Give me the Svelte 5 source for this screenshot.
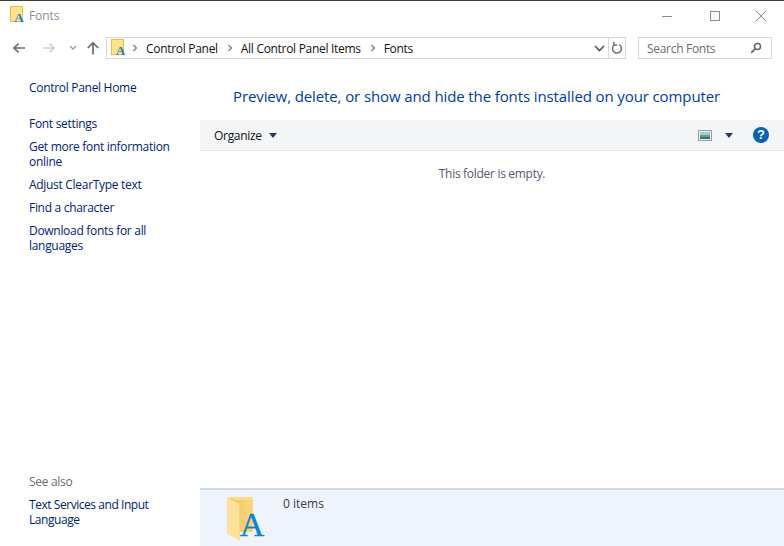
<script>
  const tasks = [
    { label: 'Font settings' },
    { label: 'Get more font information online' },
    { label: 'Adjust ClearType text' },
    { label: 'Find a character' },
    { label: 'Download fonts for all languages' }
  ];
  const crumbs = ['Control Panel', 'All Control Panel Items', 'Fonts'];
</script>

<div class="window">
  <header class="titlebar">
    <svg class="fonticon" width="16" height="19" viewBox="0 0 16 19">
      <rect x="0.5" y="0.5" width="12" height="15" fill="#fde38c" stroke="#e8bd45" />
      <text x="9" y="15.5" class="glyph" font-size="13" text-anchor="middle">A</text>
    </svg>
    <span class="title">Fonts</span>
    <div class="controls">
      <svg width="12" height="12" viewBox="0 0 12 12"><path d="M1 6.5h10" stroke="#8a8a8a" /></svg>
      <svg width="12" height="12" viewBox="0 0 12 12"><rect x="2.5" y="1.5" width="9" height="9" fill="none" stroke="#8a8a8a" /></svg>
      <svg width="12" height="12" viewBox="0 0 12 12"><path d="M1 1l10 10M11 1L1 11" stroke="#8a8a8a" /></svg>
    </div>
  </header>

  <nav class="navbar">
    <svg class="nav back" width="14" height="12" viewBox="0 0 14 12"><path d="M13 6H2M6.500 1.500L2 6l4.500 4.500" fill="none" stroke="#6d6d6d" stroke-width="1.700" /></svg>
    <svg class="nav forward" width="14" height="12" viewBox="0 0 14 12"><path d="M1 6h11M7.500 1.500L12 6l-4.500 4.500" fill="none" stroke="#cfcfcf" stroke-width="1.700" /></svg>
    <svg class="nav recent" width="8" height="6" viewBox="0 0 8 6"><path d="M1 1l3 3 3-3" fill="none" stroke="#9a9a9a" stroke-width="1.300" /></svg>
    <svg class="nav up" width="14" height="14" viewBox="0 0 14 14"><path d="M7 13.500V2M1.800 7L7 1.800 12.200 7" fill="none" stroke="#6d6d6d" stroke-width="1.700" /></svg>

    <div class="address">
      <svg class="fonticon" width="16" height="20" viewBox="0 0 16 20">
        <rect x="0.500" y="1.500" width="12" height="15" fill="#fde38c" stroke="#e8bd45" />
        <text x="9.500" y="16.500" class="glyph" font-size="13" text-anchor="middle">A</text>
      </svg>
      {#each crumbs as crumb}
        <svg class="sep" width="6" height="8" viewBox="0 0 6 8"><path d="M1.500 1l3 3-3 3" fill="none" stroke="#777" stroke-width="1.200" /></svg>
        <span class="crumb">{crumb}</span>
      {/each}
      <svg class="dropdown" width="11" height="7" viewBox="0 0 11 7"><path d="M1 1l4.500 4.500L10 1" fill="none" stroke="#555" stroke-width="1.600" /></svg>
      <div class="refresh">
        <svg width="12" height="14" viewBox="0 0 12 14"><path d="M3.800 3.600a4.500 4.500 0 1 0 4.400 0M2.800 .8v3.200h3.400" fill="none" stroke="#707070" stroke-width="1.500" /></svg>
      </div>
    </div>

    <div class="search">
      <span>Search Fonts</span>
      <svg width="12" height="12" viewBox="0 0 12 12"><circle cx="7.500" cy="4.500" r="3" fill="none" stroke="#666" stroke-width="1.500" /><path d="M5.300 6.700L1.200 10.800" stroke="#666" stroke-width="1.800" /></svg>
    </div>
  </nav>

  <div class="body">
    <aside class="sidebar">
      <div class="links">
        <a class="home" href="#home">Control Panel Home</a>
        {#each tasks as task}
          <a href="#task">{task.label}</a>
        {/each}
      </div>
      <div class="seealso">
        <div class="seelabel">See also</div>
        <a class="tight" href="#text">Text Services and Input Language</a>
      </div>
    </aside>

    <main class="content">
      <h1>Preview, delete, or show and hide the fonts installed on your computer</h1>
      <div class="toolbar">
        <span class="organize">Organize</span>
        <span class="caret"></span>
        <div class="tools">
          <svg width="14" height="11" viewBox="0 0 14 11">
            <rect x="0.500" y="0.500" width="13" height="10" fill="#e8eef3" stroke="#9c9c9c" />
            <rect x="2" y="2" width="10" height="3" fill="#9fcbea" />
            <rect x="2" y="5" width="10" height="2" fill="#6f9c7c" />
            <rect x="2" y="7" width="10" height="2" fill="#3f6f78" />
          </svg>
          <span class="caret"></span>
          <div class="help">?</div>
        </div>
      </div>
      <div class="empty">This folder is empty.</div>
      <footer class="status">
        <svg width="40" height="50" viewBox="0 0 40 50">
          <defs>
            <linearGradient id="folderback" x1="0" x2="1" y1="0" y2="0">
              <stop offset="0" stop-color="#eec463" />
              <stop offset="1" stop-color="#f8d77f" />
            </linearGradient>
          </defs>
          <path d="M3 2h23v34H3z" fill="url(#folderback)" />
          <path d="M0.500 2l12 6v36l-12-7z" fill="#fde39a" stroke="#f4d27a" stroke-width="0.500" />
          <path d="M0.500 1H26v3H8z" fill="#f8dc8a" />
          <text x="25" y="40" class="glyph thin" font-size="34" text-anchor="middle">A</text>
        </svg>
        <span class="count">0 items</span>
      </footer>
    </main>
  </div>
</div>

<style>
  :global(body) {
    margin: 0;
    background: #fff;
  }

  .window {
    width: 784px;
    height: 546px;
    display: flex;
    flex-direction: column;
    overflow: hidden;
    font-family: "Open Sans", "Noto Sans", sans-serif;
    font-size: 12px;
    letter-spacing: -0.3px;
    color: #1a1a1a;
    border-top: 1px solid #3a3a3a;
    box-sizing: border-box;
  }

  .glyph {
    font-family: "Liberation Serif", serif;
    font-weight: 700;
    fill: #0f83cd;
    letter-spacing: 0;
  }

  .glyph.thin {
    font-weight: 400;
    stroke: #0f83cd;
    stroke-width: 0.400;
  }

  .titlebar {
    height: 29px;
    display: flex;
    align-items: center;
    padding-left: 10px;
    flex: none;
  }

  .title {
    margin-left: 3px;
    color: #8d8d9c;
    letter-spacing: -0.1px;
  }

  .controls {
    margin-left: auto;
    margin-right: 17px;
    display: flex;
    gap: 35px;
  }

  .navbar {
    height: 36px;
    flex: none;
    display: flex;
    align-items: center;
    padding-left: 12px;
  }

  .nav.forward {
    margin-left: 16px;
  }

  .nav.recent {
    margin-left: 13px;
  }

  .nav.up {
    margin-left: 9px;
  }

  .address {
    width: 520px;
    height: 22px;
    margin-left: 6px;
    box-sizing: border-box;
    border: 1px solid #d9d9d9;
    display: flex;
    align-items: center;
    padding-left: 4px;
    color: #111;
  }

  .sep {
    margin: 0 8px 0 5px;
  }

  .crumb {
    margin-right: 4px;
  }

  .dropdown {
    margin-left: auto;
    margin-right: 3px;
  }

  .refresh {
    width: 17px;
    height: 100%;
    box-sizing: border-box;
    border-left: 1px solid #d9d9d9;
    display: flex;
    align-items: center;
    justify-content: center;
  }

  .search {
    width: 134px;
    height: 22px;
    margin-left: 12px;
    box-sizing: border-box;
    border: 1px solid #d9d9d9;
    display: flex;
    align-items: center;
    justify-content: space-between;
    padding: 0 9px 0 8px;
    color: #6d6d6d;
  }

  .body {
    flex: 1;
    display: flex;
    min-height: 0;
  }

  .sidebar {
    width: 200px;
    flex: none;
    box-sizing: border-box;
    padding: 14px 20px 19px 29px;
    display: flex;
    flex-direction: column;
    justify-content: space-between;
  }

  a {
    color: #00236e;
    text-decoration: none;
    line-height: 15px;
    display: block;
  }

  a.tight {
    letter-spacing: -0.45px;
  }

  .links {
    display: flex;
    flex-direction: column;
    gap: 8px;
  }

  .home {
    margin-bottom: 13px;
  }

  .seelabel {
    color: #6d6d6d;
    line-height: 15px;
    margin-bottom: 8px;
  }

  .content {
    flex: 1;
    display: flex;
    flex-direction: column;
    min-width: 0;
  }

  h1 {
    margin: 0;
    height: 54px;
    box-sizing: border-box;
    padding: 18px 0 0 33px;
    font-size: 15px;
    font-weight: 400;
    letter-spacing: -0.11px;
    line-height: 24px;
    color: #003c9d;
    white-space: nowrap;
  }

  .toolbar {
    height: 31px;
    flex: none;
    box-sizing: border-box;
    background: #f4f5f7;
    border-bottom: 1px solid #e6e8ea;
    display: flex;
    align-items: center;
    padding: 0 15px 0 14px;
    color: #111;
  }

  .caret {
    width: 0;
    height: 0;
    margin-left: 7px;
    border-left: 4.500px solid transparent;
    border-right: 4.500px solid transparent;
    border-top: 5px solid #2a3a5c;
  }

  .tools {
    margin-left: auto;
    display: flex;
    align-items: center;
  }

  .tools .caret {
    margin-left: 13px;
  }

  .help {
    width: 16px;
    height: 16px;
    margin-left: 20px;
    border-radius: 50%;
    background: #0a62b8;
    color: #fff;
    font-family: "Liberation Sans", sans-serif;
    font-weight: 700;
    font-size: 13px;
    line-height: 16px;
    text-align: center;
    letter-spacing: 0;
  }

  .empty {
    flex: 1;
    padding-top: 14px;
    text-align: center;
    color: #5c5470;
  }

  .status {
    height: 58px;
    flex: none;
    box-sizing: border-box;
    background: #eff3fb;
    border-top: 2px solid #c9d9ea;
    display: flex;
    align-items: flex-start;
    padding: 6px 0 0 27px;
  }

  .count {
    margin: -1px 0 0 16px;
    color: #333c52;
    letter-spacing: 0;
  }
</style>
